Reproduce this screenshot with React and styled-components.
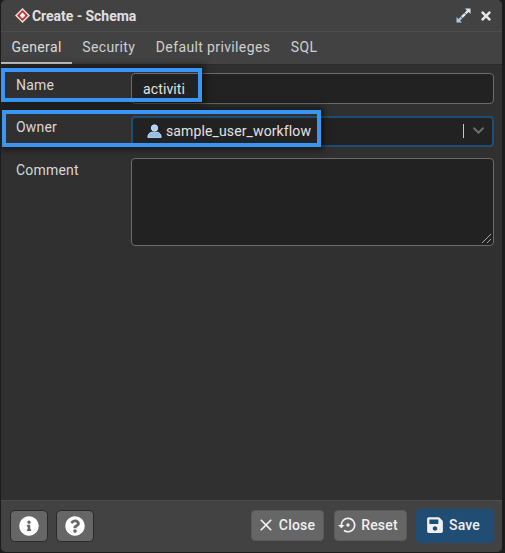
import React from 'react'
import styled, { createGlobalStyle } from 'styled-components'
import { FaInfoCircle, FaQuestionCircle, FaSave, FaTimes, FaChevronDown } from 'react-icons/fa'
import { MdClose, MdSettingsBackupRestore } from 'react-icons/md'

const Global = createGlobalStyle`
  html, body { margin: 0; padding: 0; background: #1c1c1c; }
  body { font-family: Roboto, "Liberation Sans", sans-serif; }
`

const Dialog = styled.div`
  position: relative;
  box-sizing: border-box;
  width: 501px;
  height: 552px;
  margin-left: 1px;
  display: flex;
  flex-direction: column;
  background: #303030;
  border-radius: 5px;
  overflow: hidden;
`
const TitleBar = styled.div`
  height: 32px;
  flex: none;
  box-sizing: border-box;
  display: flex;
  align-items: center;
  padding: 0 9px 0 14px;
  background: #424242;
  border-bottom: 1px solid #4c4c4c;
  color: #e0e0e0;
  font-size: 14px;
  font-weight: 700;
`
const Title = styled.span`
  flex: 1;
  margin-left: 2px;
  letter-spacing: -0.05px;
`
const TitleIcon = styled.button`
  border: 0;
  padding: 0;
  margin-left: ${p => p.$gap}px;
  background: none;
  color: #e4e4e4;
  display: flex;
`
const Tabs = styled.div`
  height: 33px;
  flex: none;
  box-sizing: border-box;
  display: flex;
  background: #424242;
  border-bottom: 1px solid #2a2a2a;
`
const Tab = styled.div`
  box-sizing: border-box;
  height: 32px;
  padding: 7px 10px 0 10.5px;
  font-size: 14px;
  letter-spacing: 0.37px;
  color: ${p => (p.$active ? '#dcdcdc' : '#cfcfcf')};
  border-bottom: 2px solid ${p => (p.$active ? '#d4d4d4' : 'transparent')};
`
const Form = styled.div`
  flex: 1;
  display: flex;
  flex-direction: column;
  padding: 8px 8px 0 15px;
`
const Row = styled.div`
  display: flex;
  align-items: flex-start;
  margin-bottom: ${p => p.$mb || 0}px;
`
const Label = styled.label`
  width: 115px;
  flex: none;
  padding-top: ${p => p.$pt || 4}px;
  font-size: 14px;
  letter-spacing: 0.2px;
  color: #d8d8d8;
`
const Field = styled.div`
  flex: 1;
  box-sizing: border-box;
  height: ${p => p.$h || 31}px;
  display: flex;
  align-items: center;
  padding: 0 0 ${p => (p.$focus ? 2 : 0)}px 11px;
  background: #222222;
  border: ${p => (p.$focus ? '2px solid #1f4d74' : '1px solid #6b6b6b')};
  border-radius: 4px;
  font-size: 14px;
  letter-spacing: 0.12px;
  color: #e2e2e2;
  position: relative;
`
const OwnerValue = styled.div`
  flex: 1;
  display: flex;
  align-items: center;
  gap: 4px;
  padding-left: 3px;
  color: #e2e2e2;
`
const Caret = styled.div`
  width: 1px;
  height: 14px;
  background: #c8c8c8;
  margin-right: 8px;
`
const Chevron = styled.div`
  color: #6c6c6c;
  display: flex;
  margin-right: 7px;
`
const Grip = styled.svg`
  position: absolute;
  right: 1px;
  bottom: 1px;
`
const Footer = styled.div`
  height: 52px;
  flex: none;
  box-sizing: border-box;
  display: flex;
  align-items: center;
  gap: 8px;
  padding: 0 8px 2px 9px;
  background: #424242;
  border-top: 1px solid #4c4c4c;
`
const IconButton = styled.button`
  box-sizing: border-box;
  width: 38px;
  height: 32px;
  display: flex;
  align-items: center;
  justify-content: center;
  padding: 0;
  background: #666666;
  border: 1px solid #2a2a2a;
  border-radius: 5px;
  color: #fff;
`
const Spacer = styled.div`
  flex: 1;
`
const Button = styled.button`
  box-sizing: border-box;
  height: ${p => (p.$primary ? 34 : 31)}px;
  width: ${p => (p.$primary ? 78 : 73)}px;
  margin-left: 1.5px;
  display: flex;
  align-items: center;
  justify-content: center;
  gap: ${p => (p.$primary ? 5 : 3)}px;
  padding: 0 4px 1px 0;
  font-family: Roboto, "Liberation Sans", sans-serif;
  font-size: 14px;
  font-weight: 500;
  letter-spacing: 0.2px;
  color: #f0f0f0;
  background: ${p => (p.$primary ? '#1f4d74' : '#666666')};
  border: 1px solid ${p => (p.$primary ? '#1f4d74' : '#5a5a5a')};
  border-radius: 4px;
`
const Highlight = styled.div`
  position: absolute;
  box-sizing: border-box;
  left: ${p => p.$x}px;
  top: ${p => p.$y}px;
  width: ${p => p.$w}px;
  height: ${p => p.$h}px;
  border: 4px solid #3a96f5;
  box-shadow: 0 0 7px 3px rgba(0, 0, 0, 0.5);
  pointer-events: none;
`
const Logo = () => (
  <svg width="15" height="15" viewBox="0 0 15 15">
    <path d="M7.5 0 15 7.5 7.5 15 0 7.5Z" fill="#f4dcdc" />
    <path d="M7.5 2 13 7.5 7.5 13 2 7.5Z" fill="#c9312c" />
    <path d="M7.5 4.6 10.4 7.5 7.5 10.4 4.6 7.5Z" fill="#fff" />
  </svg>
)
const Expand = () => (
  <svg width="15" height="15" viewBox="0 0 15 15" fill="#dfe6ec">
    <path d="M9 .5h5.5V6l-1.9-1.9-2.2 2.2-1.7-1.7 2.2-2.2Z" />
    <path d="M6 14.5H.5V9l1.9 1.9 2.2-2.2 1.7 1.7-2.2 2.2Z" fill="#a9c6dc" />
    <path d="M5 8.3 8.3 5l1.7 1.7L6.7 10Z" />
  </svg>
)
const UserIcon = () => (
  <svg width="15" height="14" viewBox="0 0 15 14">
    <circle cx="7.5" cy="4" r="3.2" fill="#a8d4f7" stroke="#d6ebfb" strokeWidth="0.8" />
    <path d="M.8 13.4c0-3.6 2.4-5.2 4.2-5.2h5c1.8 0 4.2 1.6 4.2 5.2Z" fill="#8fc1ee" stroke="#d6ebfb" strokeWidth="0.8" />
  </svg>
)

export default function App() {
  return (
    <>
      <Global />
      <Dialog>
        <TitleBar>
          <Logo />
          <Title>Create - Schema</Title>
          <TitleIcon $gap={8}><Expand /></TitleIcon>
          <TitleIcon $gap={8}><FaTimes size={14} /></TitleIcon>
        </TitleBar>
        <Tabs>
          <Tab $active>General</Tab>
          <Tab>Security</Tab>
          <Tab>Default privileges</Tab>
          <Tab>SQL</Tab>
        </Tabs>
        <Form>
          <Row $mb={12}>
            <Label>Name</Label>
            <Field>activiti</Field>
          </Row>
          <Row $mb={11}>
            <Label $pt={3}>Owner</Label>
            <Field $focus>
              <OwnerValue><UserIcon />sample_user_workflow</OwnerValue>
              <Caret />
              <Chevron><FaChevronDown size={13} /></Chevron>
            </Field>
          </Row>
          <Row>
            <Label>Comment</Label>
            <Field $h={88}>
              <Grip width="12" height="12" viewBox="0 0 12 12" stroke="#a8a8a8" strokeWidth="1">
                <path d="M2 11 11 2M7 11 11 7" />
              </Grip>
            </Field>
          </Row>
        </Form>
        <Footer>
          <IconButton><FaInfoCircle size={20} /></IconButton>
          <IconButton><FaQuestionCircle size={20} /></IconButton>
          <Spacer />
          <Button><MdClose size={20} />Close</Button>
          <Button><MdSettingsBackupRestore size={20} />Reset</Button>
          <Button $primary><FaSave size={18} />Save</Button>
        </Footer>
        <Highlight $x={0} $y={68} $w={201} $h={34} />
        <Highlight $x={1} $y={110} $w={319} $h={37} />
      </Dialog>
    </>
  )
}
